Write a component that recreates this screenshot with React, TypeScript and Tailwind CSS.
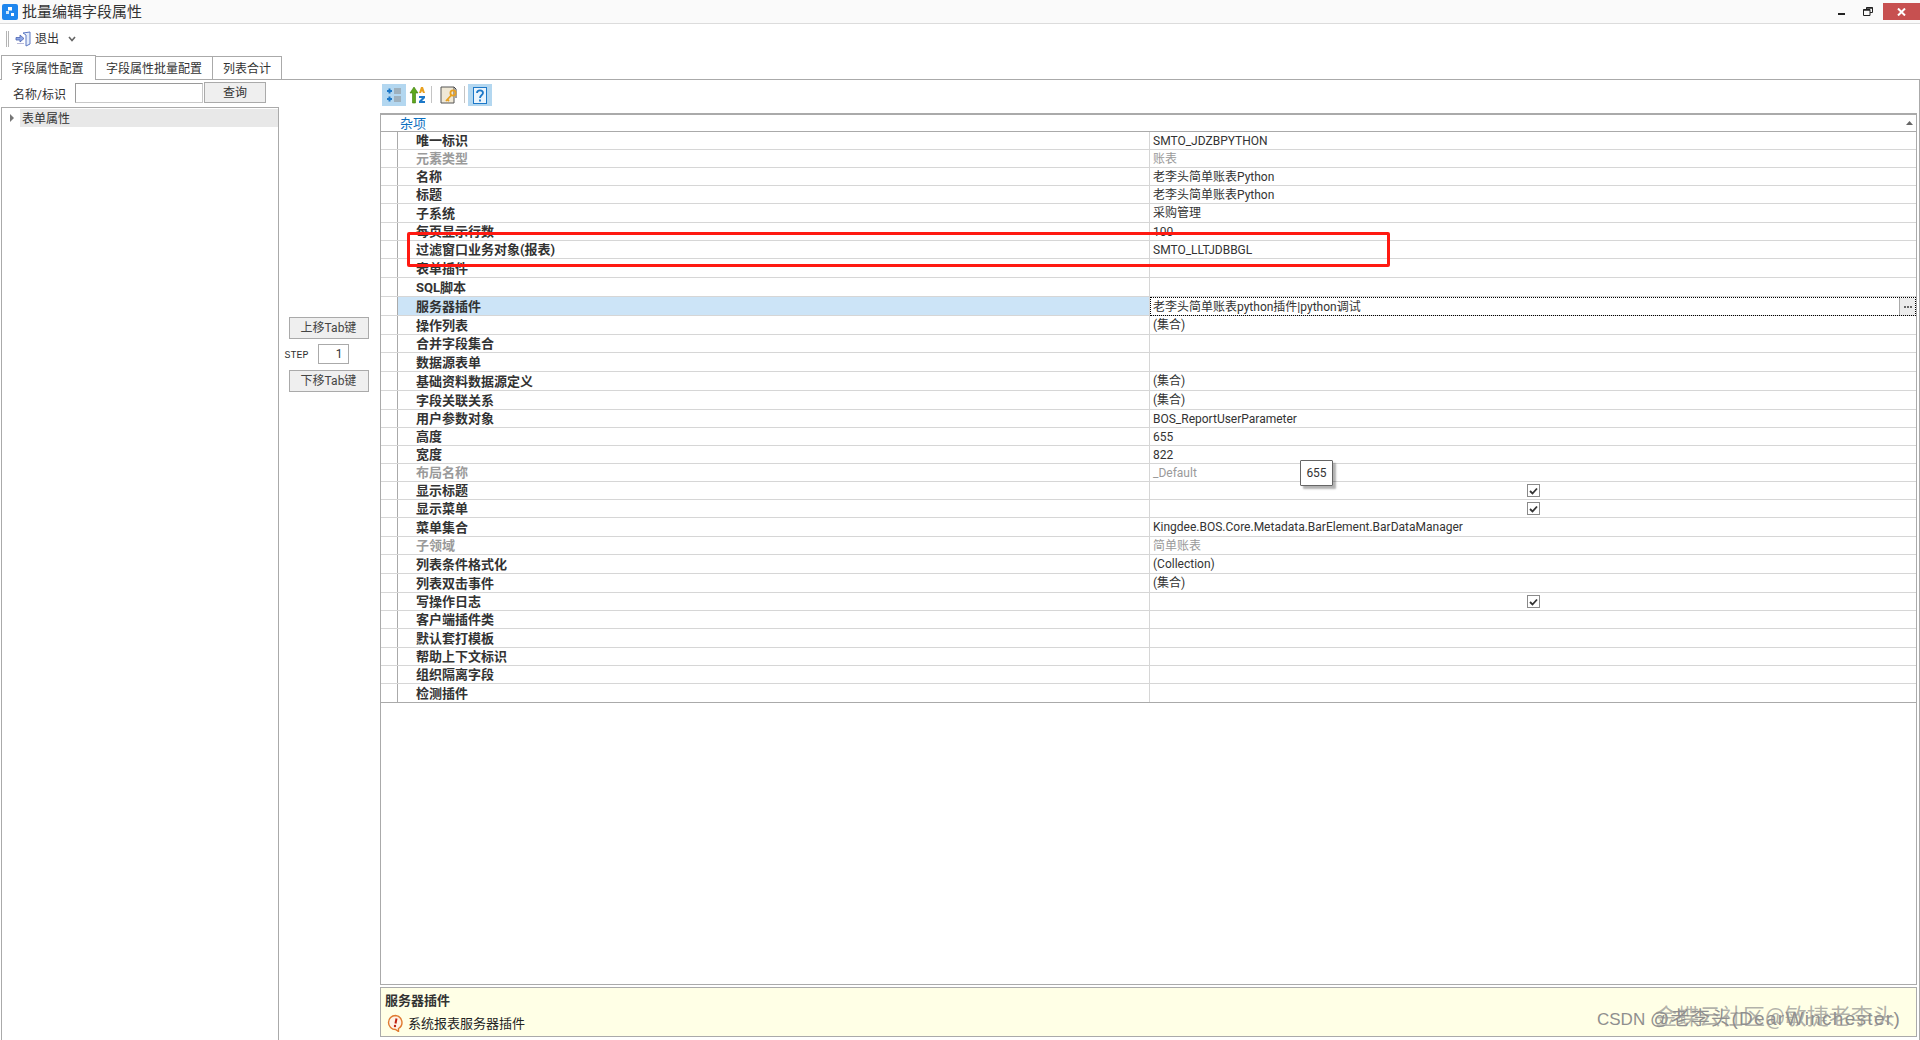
import React from "react";

type Row = { l: string; v?: string; tall?: boolean; dis?: boolean; check?: boolean; sel?: boolean };

const rows: Row[] = [
  { l: "唯一标识", v: "SMTO_JDZBPYTHON" },
  { l: "元素类型", v: "账表", dis: true },
  { l: "名称", v: "老李头简单账表Python" },
  { l: "标题", v: "老李头简单账表Python" },
  { l: "子系统", v: "采购管理", tall: true },
  { l: "每页显示行数", v: "100" },
  { l: "过滤窗口业务对象(报表)", v: "SMTO_LLTJDBBGL" },
  { l: "表单插件", tall: true },
  { l: "SQL脚本", tall: true },
  { l: "服务器插件", v: "老李头简单账表python插件|python调试", tall: true, sel: true },
  { l: "操作列表", v: "(集合)", tall: true },
  { l: "合并字段集合" },
  { l: "数据源表单", tall: true },
  { l: "基础资料数据源定义", v: "(集合)", tall: true },
  { l: "字段关联关系", v: "(集合)", tall: true },
  { l: "用户参数对象", v: "BOS_ReportUserParameter" },
  { l: "高度", v: "655" },
  { l: "宽度", v: "822" },
  { l: "布局名称", v: "_Default", dis: true },
  { l: "显示标题", check: true },
  { l: "显示菜单", check: true },
  { l: "菜单集合", v: "Kingdee.BOS.Core.Metadata.BarElement.BarDataManager", tall: true },
  { l: "子领域", v: "简单账表", dis: true },
  { l: "列表条件格式化", v: "(Collection)", tall: true },
  { l: "列表双击事件", v: "(集合)", tall: true },
  { l: "写操作日志", check: true },
  { l: "客户端插件类" },
  { l: "默认套打模板", tall: true },
  { l: "帮助上下文标识" },
  { l: "组织隔离字段" },
  { l: "检测插件", tall: true },
];

const font = "font-['Roboto','Noto_Sans_CJK_SC',sans-serif]";

function Check() {
  return (
    <span className="flex h-[13px] w-[13px] items-center justify-center border border-[#8a8a8a] bg-white">
      <svg width="9" height="8" viewBox="0 0 9 8">
        <path d="M1 4 L3.5 6.5 L8 1.5" fill="none" stroke="#333" strokeWidth="1.8" />
      </svg>
    </span>
  );
}

function GridRow({ r, last }: { r: Row; last: boolean }) {
  return (
    <div
      className={`flex border-b ${r.tall ? "h-[19px]" : "h-[18px]"} ${
        last ? "border-[#aaaaaa]" : "border-[#d6d6d6]"
      }`}
    >
      <div className="w-[17px] shrink-0 border-r border-[#aaaaaa] bg-white" />
      <div
        className={`flex w-[752px] shrink-0 items-center border-r border-[#d6d6d6] pl-[18px] text-[13px] font-bold leading-none ${
          r.dis ? "text-[#9a9a9a]" : "text-[#333333]"
        } ${r.sel ? "bg-[#cce4f7]" : ""}`}
      >
        {r.l}
      </div>
      {r.sel ? (
        <div className="-mb-px flex min-w-0 flex-1 items-center justify-between border border-dotted border-black pl-[2px] text-[12px] leading-none text-[#333333]">
          <span>{r.v}</span>
          <span className="flex h-full w-[16px] items-center justify-center gap-px border-l border-[#aaaaaa] bg-[#ececec]">
            <i className="h-[2px] w-[2px] bg-[#666666]" />
            <i className="h-[2px] w-[2px] bg-[#666666]" />
            <i className="h-[2px] w-[2px] bg-[#666666]" />
          </span>
        </div>
      ) : (
        <div
          className={`flex min-w-0 flex-1 items-center pl-[3px] text-[12px] leading-none ${
            r.dis ? "text-[#9a9a9a]" : "text-[#333333]"
          } ${r.check ? "justify-center pl-0 pr-[2px]" : ""}`}
        >
          {r.check ? <Check /> : r.v}
        </div>
      )}
    </div>
  );
}

function MoveButton({ children }: { children: React.ReactNode }) {
  return (
    <button className="flex h-[22px] w-[80px] items-center justify-center border border-[#aaaaaa] bg-[#efefef] text-[12px] leading-none text-[#444444]">
      {children}
    </button>
  );
}

function Tab({ children, active, w }: { children: React.ReactNode; active?: boolean; w: string }) {
  return (
    <div
      className={`flex items-center justify-center border border-[#aaaaaa] bg-white pt-[2px] text-[12px] leading-none text-[#333333] ${w} ${
        active ? "-mb-px h-[25px] border-b-0 pr-[2px]" : "ml-[-1px] h-[23px] border-b-0"
      }`}
    >
      {children}
    </div>
  );
}

export default function App() {
  return (
    <div className={`relative flex h-[1040px] w-[1920px] flex-col overflow-hidden bg-white ${font}`}>
      {/* title bar */}
      <div className="flex h-[24px] shrink-0 items-center border-b border-[#dcdcdc] bg-[#fafafa]">
        <svg className="ml-[2px]" width="16" height="16" viewBox="0 0 16 16">
          <rect width="16" height="16" rx="2" fill="#1e86ee" />
          <rect x="6" y="3" width="4" height="3.5" fill="#fff" />
          <rect x="4" y="7" width="3" height="3" fill="#cfe6fb" />
          <rect x="9" y="9" width="3" height="3" fill="#fff" />
        </svg>
        <span className="ml-[4px] pt-[2px] text-[15px] leading-none text-[#333333]">批量编辑字段属性</span>
        <div className="ml-auto flex h-full items-start">
          <div className="mt-[13px] mr-[18px] h-[2px] w-[7px] bg-[#222222]" />
          <svg className="mt-[7px] mr-[10px]" width="10" height="9" viewBox="0 0 10 9">
            <path d="M3.5 2.5V.5h6v5H7M.5 2.5h6.5v6H.5z" fill="none" stroke="#222" />
            <path d="M.5 3h6.5M3.5 1h6" stroke="#222" strokeWidth="1.4" />
          </svg>
          <div className="mt-[3px] flex h-[17px] w-[37px] items-center justify-center bg-[#c75050]">
            <svg width="9" height="8" viewBox="0 0 9 8">
              <path d="M1 .5 L8 7.5 M8 .5 L1 7.5" stroke="#fff" strokeWidth="2" />
            </svg>
          </div>
        </div>
      </div>

      {/* toolbar */}
      <div className="flex h-[30px] shrink-0 items-center pl-[6px]">
        <div className="h-[16px] w-[3px] border-x border-[#b4b4b4]" />
        <svg className="ml-[6px]" width="17" height="16" viewBox="0 0 17 16">
          <path d="M8 2 L15 1 V13 L11 15 V4 Z" fill="#e6eefb" stroke="#5c79c4" />
          <path d="M1 6.5 H5 V4 L9 7.5 L5 11 V9 H1 Z" fill="#8fa8e6" stroke="#4a62b0" strokeWidth=".8" />
          <path d="M2 12.5 H9" stroke="#b9b9d8" />
        </svg>
        <span className="ml-[3px] text-[12px] leading-none text-[#333333]">退出</span>
        <svg className="ml-[9px]" width="8" height="6" viewBox="0 0 8 6">
          <path d="M1 1 L4 4.5 L7 1" fill="none" stroke="#666" strokeWidth="1.6" />
        </svg>
      </div>

      {/* tabs */}
      <div className="flex h-[26px] shrink-0 items-end border-b border-[#aaaaaa] pl-px">
        <Tab active w="w-[95px]">字段属性配置</Tab>
        <Tab w="w-[118px]">字段属性批量配置</Tab>
        <Tab w="w-[70px]">列表合计</Tab>
      </div>

      {/* body */}
      <div className="flex min-h-0 flex-1 border-r border-[#aaaaaa]">
        {/* left */}
        <div className="flex w-[279px] shrink-0 flex-col pl-px">
          <div className="flex h-[27px] shrink-0 items-start">
            <span className="ml-[12px] mt-[8px] w-[62px] text-[12px] leading-[14px] text-[#333333]">名称/标识</span>
            <div className="mt-[3px] h-[20px] w-[128px] border border-[#c8c8c8] border-t-[#9a9a9a] border-l-[#9a9a9a] bg-white" />
            <button className="ml-px mt-[2px] flex h-[21px] w-[62px] items-center justify-center border border-[#aaaaaa] bg-[#efefef] pt-px text-[12px] leading-none text-[#333333]">
              查询
            </button>
          </div>
          <div className="min-h-0 flex-1 border border-b-0 border-[#aaaaaa] pt-px">
            <div className="flex h-[18px] items-center">
              <svg className="ml-[8px]" width="4" height="8" viewBox="0 0 4 8">
                <path d="M0 0 L4 4 L0 8 Z" fill="#777" />
              </svg>
              <span className="ml-[6px] flex h-full flex-1 items-center bg-[#e8e8e8] pl-[2px] pt-[2px] text-[12px] leading-none text-[#333333]">
                表单属性
              </span>
            </div>
          </div>
        </div>

        {/* middle */}
        <div className="flex w-[101px] shrink-0 flex-col items-center pt-[237px]">
          <div className="-ml-[2px]">
            <MoveButton>上移Tab键</MoveButton>
          </div>
          <div className="my-[5px] flex h-[20px] w-[94px] items-center pl-[2px]">
            <span className="mt-[3px] w-[33px] font-['Liberation_Mono',monospace] text-[10px] leading-none text-[#333333]">STEP</span>
            <div className="flex h-[20px] w-[31px] items-center justify-end border border-[#aaaaaa] pr-[5px] text-[12px] leading-none text-[#333333]">
              1
            </div>
          </div>
          <div className="-ml-[2px] mt-px">
            <MoveButton>下移Tab键</MoveButton>
          </div>
        </div>

        {/* right */}
        <div className="flex min-w-0 flex-1 flex-col pr-[2px]">
          <div className="flex h-[33px] shrink-0 items-start pl-[2px] pt-[4px]">
            <div className="flex h-[22px] w-[24px] items-center justify-center bg-[#b3d7f0]">
              <svg width="16" height="16" viewBox="0 0 16 16">
                <path d="M3.5 1.5v5M1 4h5M3.5 9.5v5M1 12h5" stroke="#1c78c8" strokeWidth="2" />
                <path d="M8 2h7M8 4h7M8 6h7M8 10h7M8 12h7M8 14h7" stroke="#8a8a8a" />
              </svg>
            </div>
            <svg className="ml-[3px] mt-[2px]" width="18" height="18" viewBox="0 0 18 18">
              <path d="M5 1 L9 7 H6.5 V17 H3.5 V7 H1 Z" fill="#5ea81c" stroke="#3d7a0c" strokeWidth=".6" />
              <path d="M10 7 L12 1 H14 L16 7 H14 L13 5 L12 7 Z" fill="#e8a020" />
              <path d="M10 10 H16 V12 L13 15 H16 V17 H10 V15 L13 12 H10 Z" fill="#1c78c8" />
            </svg>
            <div className="ml-[4px] mt-[2px] h-[17px] w-px bg-[#c4c4c4]" />
            <svg className="ml-[8px] mt-[2px]" width="17" height="18" viewBox="0 0 17 18">
              <path d="M1 1 H14 V17 H1 Z" fill="#efe8d6" stroke="#555" />
              <path d="M14 1 L16 3 V12" stroke="#444" fill="none" />
              <circle cx="13" cy="7" r="2.6" fill="none" stroke="#e8a020" strokeWidth="1.8" />
              <path d="M11.5 9 L6 15 M7.5 13.5 L9 15" stroke="#e8a020" strokeWidth="1.8" />
            </svg>
            <div className="ml-[7px] mt-[2px] h-[17px] w-px bg-[#c4c4c4]" />
            <div className="ml-[3px] flex h-[22px] w-[24px] items-center justify-center bg-[#b3d7f0]">
              <svg width="14" height="17" viewBox="0 0 14 17">
                <rect x=".5" y=".5" width="13" height="16" fill="#eaf4fc" stroke="#1c78c8" />
                <path d="M4 6 C4 2.5 10 2.5 10 6 C10 8 7 8 7 11 M7 12.5 V14.5" fill="none" stroke="#1c78c8" strokeWidth="1.8" />
              </svg>
            </div>
          </div>

          <div className="min-h-0 flex-1 border border-t-2 border-[#aaaaaa]">
            <div className="flex h-[17px] items-center justify-between border-b border-[#aaaaaa] pl-[19px] pr-[3px]">
              <span className="text-[13px] leading-none text-[#0d6fbf]">杂项</span>
              <svg width="7" height="4" viewBox="0 0 7 4">
                <path d="M0 4 L3.5 0 L7 4 Z" fill="#666" />
              </svg>
            </div>
            {rows.map((r, i) => (
              <GridRow key={r.l} r={r} last={i === rows.length - 1} />
            ))}
          </div>

          <div className="mb-[3px] mt-[2px] flex h-[50px] shrink-0 flex-col border border-[#aaaaaa] bg-[#ffffe6] pl-[4px]">
            <span className="mt-[6px] text-[13px] font-bold leading-none text-[#333333]">服务器插件</span>
            <div className="mt-[7px] flex items-center pl-[2px]">
              <svg width="17" height="18" viewBox="0 0 17 18">
                <path d="M8.5 1.5a7 7 0 1 0 0 14l3 2v-3a7 7 0 0 0-3-13z" fill="#fff3e6" stroke="#e07a30" strokeWidth="1.4" />
                <path d="M9.5 4.5 L8.5 9.5" stroke="#c02010" strokeWidth="2" />
                <circle cx="8" cy="12" r="1.2" fill="#c02010" />
              </svg>
              <span className="ml-[4px] text-[13px] leading-none text-[#222222]">系统报表服务器插件</span>
            </div>
          </div>
        </div>
      </div>

      {/* annotation overlays */}
      <div className="pointer-events-none absolute left-[407px] top-[232px] h-[35px] w-[983px] rounded-[2px] border-[3px] border-[#ff1a12]" />
      <div className="absolute left-[1300px] top-[460px] flex h-[26px] w-[33px] items-center justify-center rounded-[1px] border border-[#666666] bg-white text-[12px] leading-none text-[#333333] shadow-[3px_3px_2px_rgba(0,0,0,0.3)]">
        655
      </div>
      <span className="pointer-events-none absolute left-[1597px] top-[1008px] whitespace-nowrap font-['Liberation_Sans','Noto_Sans_CJK_SC',sans-serif] text-[17px] leading-[22px] text-[#8f8f8f]">
        CSDN <span className="text-[19px] tracking-[1.3px]">@老李头(DearWinchester)</span>
      </span>
      <span className="pointer-events-none absolute left-[1655px] top-[1005px] whitespace-nowrap text-[22px] leading-[24px] text-[#8f8f8f]/70">
        金蝶云社区@敏捷老李头
      </span>
    </div>
  );
}
